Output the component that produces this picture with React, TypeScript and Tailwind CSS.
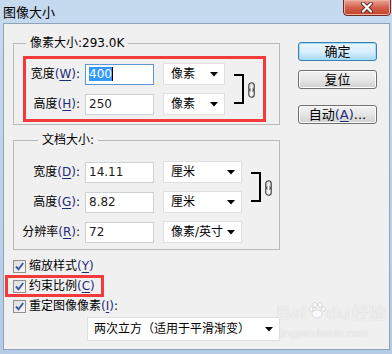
import React from 'react';

const Key = ({ k }: { k: string }) => (
  <span className="text-[#1f2a7c]">
    (<span className="underline underline-offset-2">{k}</span>)
  </span>
);

const Arrow = () => (
  <svg width="8" height="5" viewBox="0 0 8 5">
    <path d="M0 0 H8 L4 4.5 Z" fill="#000" />
  </svg>
);

const LinkIcon = () => (
  <svg width="7" height="16" viewBox="0 0 7 16">
    <rect x="0.75" y="0.75" width="5.5" height="8.5" rx="2.75" fill="#d8d8d8" stroke="#4a4a4a" strokeWidth="1.2" />
    <rect x="0.75" y="6.75" width="5.5" height="8.5" rx="2.75" fill="none" stroke="#4a4a4a" strokeWidth="1.2" />
    <rect x="2.6" y="3" width="1.8" height="10" fill="#f4f4f4" />
  </svg>
);

const Label = ({ w, children }: { w: string; children: React.ReactNode }) => (
  <div className={`${w} flex justify-end whitespace-nowrap shrink-0`}>
    <span>{children}</span>
  </div>
);

const Field = ({ value, focused }: { value: string; focused?: boolean }) => (
  <div
    className={
      focused
        ? 'w-[69px] h-[21px] bg-white border border-[#5b97d3] flex items-center pl-[3px]'
        : 'w-[69px] h-[21px] bg-white border border-[#cdd1d6] flex items-center pl-[3px]'
    }
  >
    {focused ? (
      <>
        <span className="bg-[#3399ff] text-white leading-[14px]">{value}</span>
        <span className="w-px h-[14px] bg-black" />
      </>
    ) : (
      <span className="text-[#1c1c1c]">{value}</span>
    )}
  </div>
);

const Select = ({ value, width }: { value: string; width: string }) => (
  <div className={`${width} h-[22px] bg-white border border-[#e0e0e0] flex items-center justify-between pl-[7px] pr-[6px] whitespace-nowrap`}>
    <span>{value}</span>
    <Arrow />
  </div>
);

const Bracket = () => (
  <div className="flex items-center ml-[9px]">
    <div className="w-[10px] h-[30px] border-y-2 border-r-2 border-black" />
    <div className="ml-[4px] mt-[1px]">
      <LinkIcon />
    </div>
  </div>
);

const CheckBox = () => (
  <div className="w-[13px] h-[13px] border border-[#8f8f8f] bg-gradient-to-br from-[#dcdcdc] to-[#f8f8f8] flex items-center justify-center">
    <svg width="11" height="11" viewBox="0 0 11 11">
      <path d="M2 5.5 L4.5 8.2 L9.2 2" fill="none" stroke="#3d5aa6" strokeWidth="1.9" />
    </svg>
  </div>
);

const Button = ({ children, primary, className }: { children: React.ReactNode; primary?: boolean; className?: string }) => (
  <div
    className={
      (primary
        ? 'border-[#3c7fb1] bg-gradient-to-b from-[#eaf6fd] via-[#d9f0fc] to-[#a7d9f5] shadow-[inset_0_0_0_1px_#9fdcf8] '
        : 'border-[#707070] bg-gradient-to-b from-[#f2f2f2] via-[#e6e6e6] to-[#d0d0d0] shadow-[inset_0_0_0_1px_#fcfcfc] ') +
      'w-[79px] h-[19px] rounded-[3px] border flex items-center justify-center text-[13px] text-black whitespace-nowrap ' +
      (className ?? '')
    }
  >
    {children}
  </div>
);

export default function App() {
  return (
    <div className="w-[392px] h-[354px] bg-gradient-to-b from-[#c6daef] to-[#b3cbe4] pl-[3px] pr-[2px] pb-[4px] flex flex-col font-['DejaVu_Sans','Noto_Sans_CJK_SC',sans-serif] text-[12px] text-black overflow-hidden">
      {/* title bar */}
      <div className="h-[23px] relative flex items-center pt-[2px]">
        <span className="text-[13px] leading-none">图像大小</span>
        <div className="absolute -top-px right-[-1px] w-[48px] h-[17px] rounded-b-[4px] border border-[#6e2b22] bg-gradient-to-b from-[#e9a596] via-[#d4614c] to-[#c23e28] flex items-center justify-center shadow-[inset_0_0_0_1px_#eeb0a2]">
          <svg width="14" height="11" viewBox="0 0 14 11">
            <path d="M3 1.5 L11 9.5 M11 1.5 L3 9.5" stroke="#5a2a24" strokeWidth="4" strokeLinecap="round" />
            <path d="M3 1.5 L11 9.5 M11 1.5 L3 9.5" stroke="#fff" strokeWidth="2.2" strokeLinecap="round" />
          </svg>
        </div>
      </div>

      {/* client */}
      <div className="flex-1 relative bg-[#f0f0f0] border border-[#8da3b9] pl-[9px] pt-[12px] flex items-start">
        <div className="w-[267px] flex flex-col">
          {/* group 1 */}
          <fieldset className="border border-[#b9b9b9]">
            <legend className="ml-[12px] px-[4px] h-[14px] leading-[14px]">像素大小:293.0K</legend>
            <div className="mt-[6px] mb-[2px] ml-[9px] w-[243px] h-[66px] border-[3px] border-[#f43b3b] flex items-center">
              <div className="flex flex-col gap-[8px]">
                <div className="flex items-center h-[22px]">
                  <Label w="w-[54px]">宽度<Key k="W" />:</Label>
                  <div className="ml-[5px]"><Field value="400" focused /></div>
                  <div className="ml-[9px]"><Select value="像素" width="w-[62px]" /></div>
                </div>
                <div className="flex items-center h-[22px]">
                  <Label w="w-[54px]">高度<Key k="H" />:</Label>
                  <div className="ml-[5px]"><Field value="250" /></div>
                  <div className="ml-[9px]"><Select value="像素" width="w-[62px]" /></div>
                </div>
              </div>
              <Bracket />
            </div>
          </fieldset>

          {/* group 2 */}
          <fieldset className="mt-[8px] border border-[#b9b9b9] pl-[9px] pt-[14px] pb-[6px]">
            <legend className="ml-[15px] px-[4px] h-[14px] leading-[14px]">文档大小:</legend>
            <div className="flex items-start">
              <div className="flex flex-col gap-[8px]">
                <div className="flex items-center h-[22px]">
                  <Label w="w-[57px]">宽度<Key k="D" />:</Label>
                  <div className="ml-[5px]"><Field value="14.11" /></div>
                  <div className="ml-[9px]"><Select value="厘米" width="w-[79px]" /></div>
                </div>
                <div className="flex items-center h-[22px]">
                  <Label w="w-[57px]">高度<Key k="G" />:</Label>
                  <div className="ml-[5px]"><Field value="8.82" /></div>
                  <div className="ml-[9px]"><Select value="厘米" width="w-[79px]" /></div>
                </div>
                <div className="flex items-center h-[22px]">
                  <Label w="w-[57px]">分辨率<Key k="R" />:</Label>
                  <div className="ml-[5px]"><Field value="72" /></div>
                  <div className="ml-[9px]"><Select value="像素/英寸" width="w-[79px]" /></div>
                </div>
              </div>
              <div className="h-[52px] flex items-center">
                <Bracket />
              </div>
            </div>
          </fieldset>

          {/* checkboxes */}
          <div className="mt-[6px] flex flex-col">
            <div className="h-[20px] flex items-center">
              <CheckBox />
              <span className="ml-[3px]">缩放样式<Key k="Y" /></span>
            </div>
            <div className="h-[20px] flex items-center relative">
              <CheckBox />
              <span className="ml-[3px]">约束比例<Key k="C" /></span>
              <div className="absolute left-[-8px] top-[-1px] w-[99px] h-[22px] border-[3px] border-[#f43b3b]" />
            </div>
            <div className="h-[20px] flex items-center">
              <CheckBox />
              <span className="ml-[3px]">重定图像像素<Key k="I" />:</span>
            </div>
          </div>

          <div className="mt-[1px] ml-[74px] w-[193px] h-[24px] bg-white border border-[#e0e0e0] flex items-center justify-between pl-[6px] pr-[6px]">
            <span>两次立方（适用于平滑渐变）</span>
            <Arrow />
          </div>
        </div>

        {/* buttons */}
        <div className="ml-[18px] mt-[6px] flex flex-col">
          <Button primary>确定</Button>
          <Button className="mt-[9px]">复位</Button>
          <Button className="mt-[16px]">
            自动<Key k="A" />...
          </Button>
        </div>

        {/* watermark */}
        <div className="absolute left-[273px] top-[276px] flex flex-col items-start text-white/70 [text-shadow:0_0_1px_#c4c4c4] pointer-events-none">
          <div className="flex items-end font-['Liberation_Sans','Noto_Sans_CJK_SC',sans-serif] font-bold text-[19px] leading-none">
            <span>Bai</span>
            <svg width="20" height="20" viewBox="0 0 20 20" className="mb-[2px]">
              <g fill="#ffffff" fillOpacity="0.7" stroke="#c4c4c4" strokeWidth="0.6">
                <ellipse cx="10" cy="14" rx="5" ry="4" />
                <ellipse cx="4" cy="9" rx="2" ry="2.5" />
                <ellipse cx="8" cy="5" rx="2" ry="2.6" />
                <ellipse cx="13" cy="5" rx="2" ry="2.6" />
                <ellipse cx="16.5" cy="9" rx="2" ry="2.5" />
              </g>
            </svg>
            <span>du</span>
            <span className="ml-[2px] text-[17px]">经验</span>
          </div>
          <span className="mt-[6px] ml-[2px] text-[11px] leading-none font-['Liberation_Sans',sans-serif]">jingyan.baidu.com</span>
        </div>
      </div>
    </div>
  );
}
